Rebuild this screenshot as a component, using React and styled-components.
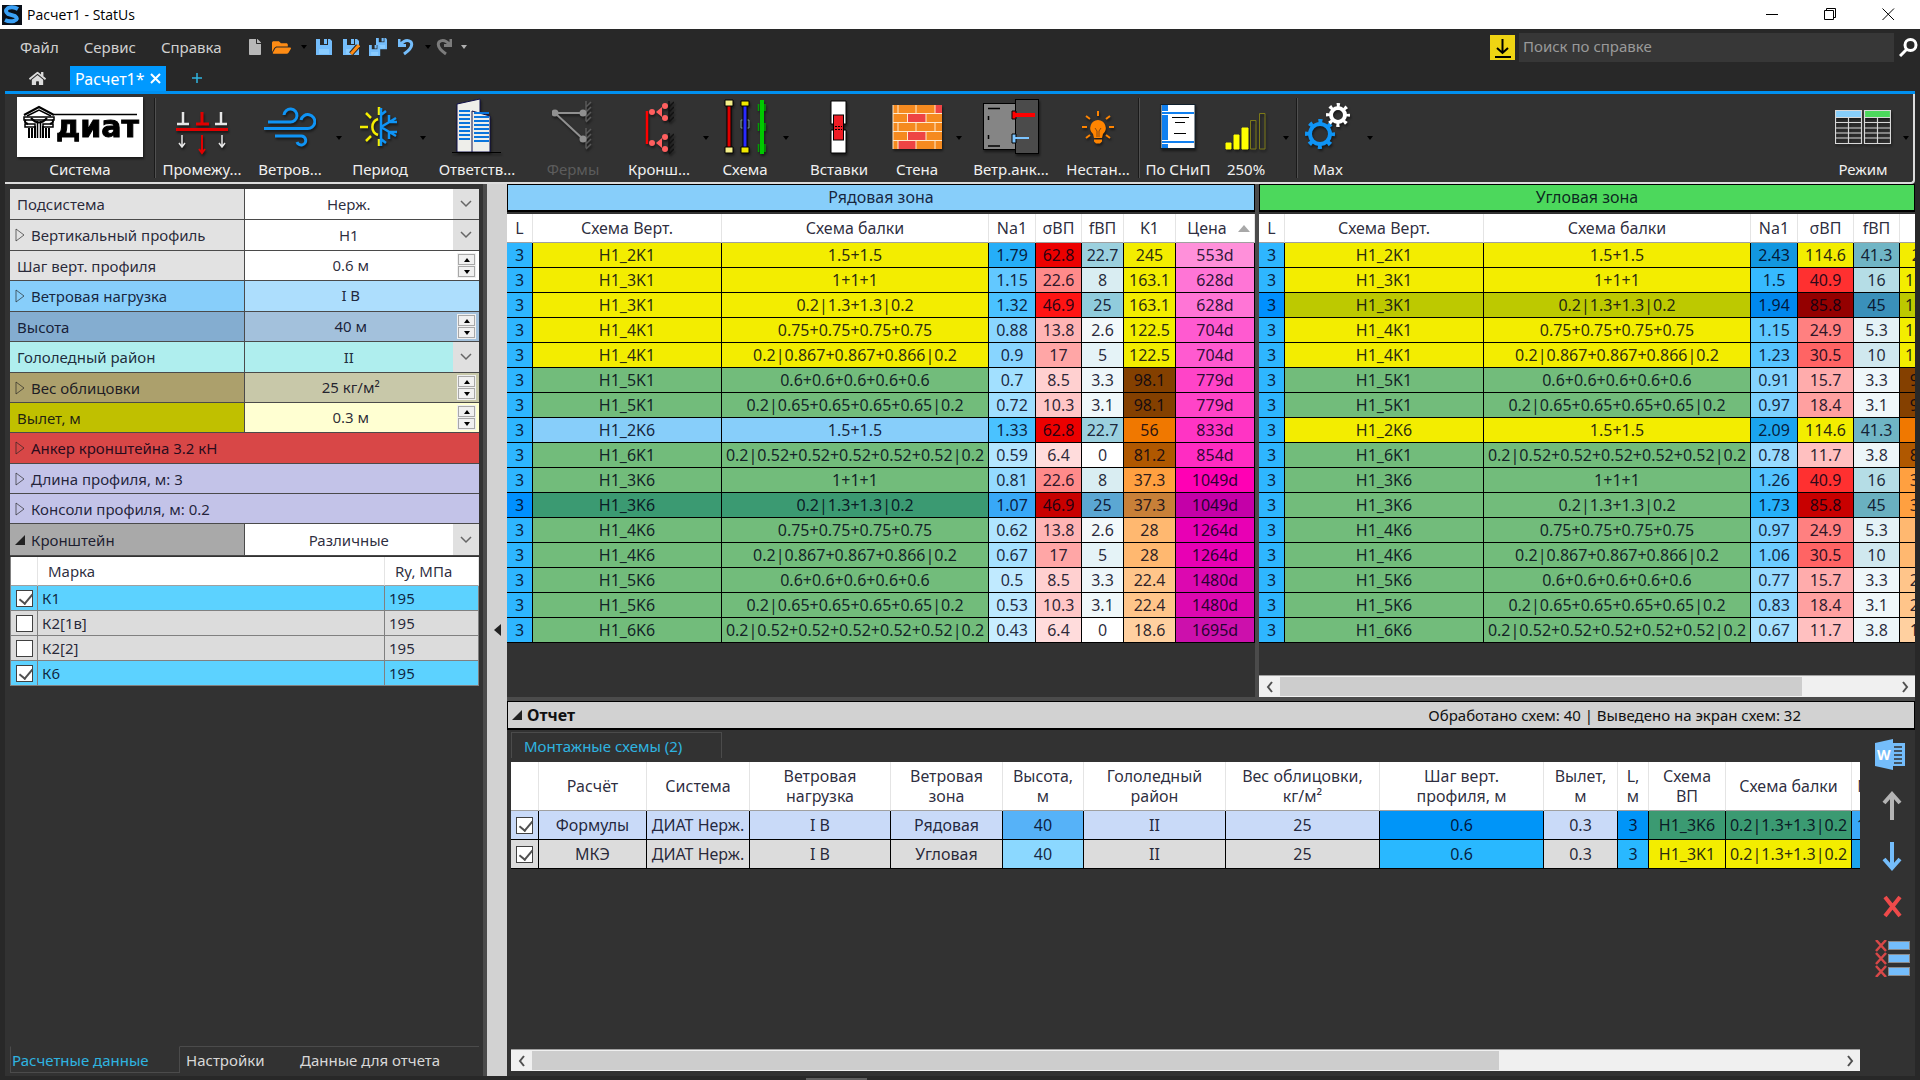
import React, { useState } from "react";
import styled, { createGlobalStyle, css } from "styled-components";
import { FaFile, FaFolderOpen, FaHome } from "react-icons/fa";

const GlobalStyle = createGlobalStyle`
  * {
    box-sizing: border-box;
  }
  body {
    margin: 0;
    background: #282828;
    font-family: "Noto Sans", "DejaVu Sans", sans-serif;
    font-size: 16px;
    line-height: 22px;
    color: #e4e4e4;
  }
  button, input, select {
    font: inherit;
    color: inherit;
    margin: 0;
    padding: 0;
    border: 0;
    border-radius: 0;
    background: none;
  }
  svg {
    display: block;
    flex: none;
  }
`;

const ink = "rgba(0, 0, 20, 0.84)";

const Page = styled.div`
  min-height: 100vh;
  display: flex;
  flex-direction: column;
`;

//------------------------------------------------ window frame
const TitleBar = styled.header`
  height: 29px;
  display: flex;
  align-items: center;
  background: white;
  color: black;
  padding: 0 3px 0 2px;
  h1 {
    flex: 1;
    margin: 0 0 0 5px;
    font: 14px/20px "Open Sans", "Noto Sans", sans-serif;
  }
`;

const WindowButton = styled.button`
  width: 58px;
  height: 29px;
  display: flex;
  align-items: center;
  justify-content: center;
`;

const MenuBar = styled.nav`
  height: 36px;
  display: flex;
  align-items: center;
  padding: 0 2px 0 20px;
  font-size: 15px;
`;

const MenuButton = styled.button`
  margin-right: 25px;
  color: #d0d0d0;
`;

const QuickButton = styled.button`
  width: ${p => p.$w}px;
  height: 22px;
  display: flex;
  align-items: center;
  color: ${p => p.$color};
`;

const Download = styled.button`
  width: 25px;
  height: 25px;
  margin: 0 4px 0 auto;
  background: #efd413;
`;

const SearchInput = styled.input`
  width: 375px;
  height: 29px;
  padding: 0 4px 2px;
  margin-right: 5px;
  background: #373737;
  &::placeholder {
    color: #9a9a9a;
    opacity: 1;
  }
`;

const TabRow = styled.div`
  height: 29px;
  margin: 0 5px;
  padding-left: 24px;
  display: flex;
  align-items: center;
  border-bottom: 3px solid #0090f0;
`;

const DocTab = styled.div`
  align-self: flex-end;
  height: 25px;
  margin: 0 26px 0 24px;
  padding: 0 5px;
  display: flex;
  align-items: center;
  gap: 5px;
  background: #0099ff;
  color: white;
`;

//------------------------------------------------ toolbar
const Toolbar = styled.div`
  height: 90px;
  margin: 0 5px 0 5px;
  padding: 3px 1px 0 2px;
  display: flex;
  align-items: flex-start;
  font-size: 15px;
  background: #323232;
  border-bottom: 2px solid #dcdcdc;
  border-right: 2px solid #dcdcdc;
  border-bottom-right-radius: 4px;
`;

const ToolButton = styled.button`
  width: ${p => p.$w}px;
  display: flex;
  flex-direction: column;
  align-items: center;
  gap: 1px;
  white-space: nowrap;
  color: ${p => (p.$off ? "#5c5c5c" : "#f0f0f0")};
  svg {
    filter: drop-shadow(1px 2px 1px rgba(0, 0, 0, 0.5));
  }
`;

const Caret = styled.button`
  width: ${p => p.$w}px;
  height: 82px;
  display: flex;
  align-items: center;
  justify-content: center;
  &::after {
    content: "";
    border: 3px solid transparent;
    border-top: 4px solid ${p => p.$color || "black"};
    border-bottom: 0;
  }
`;

const MenuCaret = styled(Caret)`
  height: 22px;
`;

const Separator = styled.div`
  width: 2px;
  height: 80px;
  margin: 1px 1px 0;
  background: #1a1a1a;
  border-right: 1px solid #505050;
`;

const Spring = styled.div`
  flex: 1;
`;

//------------------------------------------------ body
const Body = styled.div`
  flex: 1;
  margin: 0 5px;
  display: flex;
  min-height: 0;
  background: #323232;
`;

const SidePanel = styled.aside`
  width: 478px;
  padding: 5px 4px 0 5px;
  display: flex;
  flex-direction: column;
  font-size: 15px;
`;

const Splitter = styled.button`
  width: 24px;
  border-left: 4px solid #4b4b4b;
  background: #d2d2d2;
  display: flex;
  align-items: center;
  justify-content: center;
`;

const PropRow = styled.div`
  height: ${p => p.$h || 30}px;
  display: flex;
  color: ${ink};
  background: ${p => p.$bg};
  border-bottom: 1px solid #4a4a4a;
`;

const PropName = styled.div`
  flex: 0 0 50%;
  display: flex;
  align-items: center;
  padding-left: ${p => (p.$tree ? 5 : 7)}px;
  gap: 5px;
  border-right: 1px solid #4a4a4a;
`;

const PropValue = styled.div`
  flex: 1;
  position: relative;
  display: flex;
  align-items: center;
  justify-content: center;
  background: ${p => p.$bg};
  input {
    width: 100%;
    text-align: center;
    padding: 0 22px 2px 0;
  }
  select {
    width: 100%;
    height: 100%;
    appearance: none;
    text-align: center;
    text-align-last: center;
    padding-right: 26px;
  }
`;

const DropMark = styled.span`
  position: absolute;
  right: 0;
  top: 0;
  bottom: 0;
  width: 26px;
  display: flex;
  align-items: center;
  justify-content: center;
  background: #e0e0e0;
  pointer-events: none;
`;

const Spin = styled.span`
  position: absolute;
  right: 3px;
  top: 2px;
  bottom: 2px;
  width: 19px;
  padding: 1px;
  display: flex;
  flex-direction: column;
  gap: 1px;
  background: #f0f0f0;
  button {
    flex: 1;
    border: 1px solid #a8a8a8;
    display: flex;
    align-items: center;
    justify-content: center;
  }
`;

const ExpandRow = styled.button`
  height: ${p => p.$h || 30}px;
  display: flex;
  align-items: center;
  gap: 5px;
  padding-left: 5px;
  color: ${ink};
  background: ${p => p.$bg};
  border-bottom: 1px solid #4a4a4a;
`;

const Check = styled.input.attrs({ type: "checkbox" })`
  appearance: none;
  display: block;
  width: 17px;
  height: 17px;
  margin: 0 auto;
  background: white;
  border: 1px solid #404040;
  &:checked::after {
    content: "";
    display: block;
    width: 6px;
    height: 11px;
    margin: 0 0 0 5px;
    border: solid #505050;
    border-width: 0 2px 2px 0;
    transform: rotate(40deg);
  }
`;

const Grid = styled.table`
  width: ${p => (p.$w ? p.$w + "px" : "100%")};
  table-layout: fixed;
  border-collapse: separate;
  border-spacing: 0;
  color: ${ink};
  th {
    padding: 0;
    font-weight: normal;
    background: white;
    border-right: 1px solid #e4e4e4;
    border-bottom: 1px solid #a0a0a0;
  }
  td {
    padding: 0;
    text-align: center;
    white-space: nowrap;
    overflow: hidden;
  }
`;

const MarkGrid = styled(Grid)`
  margin-top: 1px;
  border-left: 1px solid #808080;
  th {
    height: 29px;
    text-align: left;
    padding-left: 10px;
  }
  td {
    height: 25px;
    text-align: left;
    border-right: 1px solid #808080;
    border-bottom: 1px solid #808080;
  }
  td + td {
    padding-left: 4px;
  }
`;

const MarkRow = styled.tr`
  background: ${p => (p.$on ? "#5cd2ff" : "#dcdcdc")};
`;

const SideTabs = styled.div`
  margin: auto 0 3px;
  height: 27px;
  display: flex;
`;

const SideTab = styled.button`
  width: ${p => p.$w}px;
  text-align: left;
  color: ${p => (p.$active ? "#2fb4e0" : "#d8d8d8")};
  padding-left: ${p => (p.$active ? 1 : 6)}px;
  border-top: 1px solid #4b4b4b;
  ${p =>
    p.$active &&
    css`
      border: 1px solid #4b4b4b;
      border-top-color: transparent;
    `}
`;

const Main = styled.main`
  flex: 1;
  min-width: 0;
  display: flex;
  flex-direction: column;
`;

const Zones = styled.div`
  display: flex;
  border-bottom: 4px solid #4b4b4b;
`;

const Zone = styled.section`
  flex: ${p => p.$grow} 1 0;
  min-width: 0;
  overflow: hidden;
  & + & {
    border-left: 4px solid #4b4b4b;
  }
  h2 {
    height: 28px;
    margin: 0 0 2px;
    font: inherit;
    line-height: 24px;
    text-align: center;
    color: ${ink};
    background: ${p => p.$bg};
    border: 1px solid black;
    border-bottom-width: 2px;
  }
`;

const ZoneGrid = styled(Grid)`
  th {
    height: 29px;
  }
  td {
    height: 25px;
    border-right: 1px solid black;
    border-bottom: 1px solid black;
  }
`;

const Cell = styled.td`
  background: ${p => p.$bg};
`;

const SortMark = styled.span`
  float: right;
  margin: 8px 4px 0 0;
  border: 6px solid transparent;
  border-bottom: 7px solid #a8a8a8;
  border-top: 0;
`;

const ScrollBar = styled.div`
  height: 22px;
  margin-top: ${p => p.$top};
  display: flex;
  background: #f0f0f0;
  border-top: 1px solid #a0a0a0;
  button {
    width: 21px;
    display: flex;
    align-items: center;
    justify-content: center;
  }
`;

const Track = styled.div`
  flex: 1;
  display: flex;
`;

const Thumb = styled.div`
  width: ${p => p.$size};
  margin: 1px 0;
  background: #cdcdcd;
`;

const ReportHead = styled.div`
  height: 29px;
  display: flex;
  align-items: center;
  gap: 4px;
  padding: 0 113px 0 4px;
  font-size: 15px;
  color: #101010;
  background: #d2d2d2;
  border: 1px solid black;
  border-bottom-width: 2px;
  h2 {
    flex: 1;
    margin: 0;
    font: bold 16px/22px "Noto Sans", sans-serif;
  }
`;

const Report = styled.section`
  flex: 1;
  display: flex;
  min-height: 0;
`;

const ReportMain = styled.div`
  flex: 1;
  min-width: 0;
  margin: 2px 0 5px 4px;
  overflow: hidden;
  display: flex;
  flex-direction: column;
`;

const ReportTab = styled.button`
  width: 211px;
  height: 26px;
  padding-left: 12px;
  margin-bottom: 4px;
  text-align: left;
  font-size: 15px;
  color: #2fb4e0;
  border: 1px solid #4b4b4b;
  border-bottom: 0;
`;

const ReportGrid = styled(Grid)`
  th {
    height: 49px;
    line-height: 20px;
    white-space: pre-line;
  }
  td {
    height: 29px;
    border-right: 1px solid black;
    border-bottom: 1px solid black;
  }
`;

const Actions = styled.div`
  width: 55px;
  padding: 9px 0 0 15px;
  display: flex;
  flex-direction: column;
  gap: 20px;
  button {
    width: 36px;
    height: 31px;
    display: flex;
    align-items: center;
  }
`;

const Footer = styled.footer`
  height: 4px;
  display: flex;
  align-items: flex-end;
  padding-left: 42%;
  div {
    width: 61px;
    height: 2px;
    background: #5f5f5f;
  }
`;

//------------------------------------------------ drawings
const Tri = ({ open }) => (
  <svg width="11" height="14" viewBox="0 0 11 14">
    {open ? (
      <path d="M10 2V12H0Z" fill="#222" />
    ) : (
      <path d="M1 1L9 7L1 13Z" fill="none" stroke="#222" strokeOpacity="0.65" />
    )}
  </svg>
);

const Chevron = () => (
  <svg width="12" height="8" viewBox="0 0 12 8">
    <path d="M1 1L6 6L11 1" fill="none" stroke="#666" strokeWidth="1.5" />
  </svg>
);

const ScrollArrow = ({ right }) => (
  <svg width="8" height="12" viewBox="0 0 8 12">
    <path d={right ? "M2 1L6 6L2 11" : "M6 1L2 6L6 11"} fill="none" stroke="#505050" strokeWidth="2" />
  </svg>
);

// every toolbar drawing is 60 high so the captions line up
const Art = ({ w, children }) => (
  <svg width={w} height="60" viewBox={`0 0 ${w} 60`} fill="none">
    {children}
  </svg>
);

const Logo = () => (
  <svg width="126" height="60" viewBox="0 0 126 60">
    <rect width="126" height="60" fill="white" />
    <g fill="none" stroke="black" strokeWidth="1.5">
      <path d="M7 18L22 10L37 18" strokeWidth="2" />
      <path d="M10 19L22 13L34 19M37 17.5H120" />
      <path d="M7 20H37V23H7Z" />
      <path d="M11 27Q6 25 9 23M33 27Q38 25 35 23" strokeWidth="2" />
      <path d="M8 27H18V30H8ZM26 27H36V30H26Z" />
      <path d="M12 31V41M15 31V41M18 29V41M26 29V41M29 31V41M32 31V41" strokeWidth="2" />
      <path d="M20.5 24V41M23.5 24V41" />
      <path d="M14 21Q22 30 30 21" strokeWidth="2" />
    </g>
    <text x="39" y="40" fontFamily="'DejaVu Sans', sans-serif" fontWeight="bold" fontSize="30" stroke="black">
      диат
    </text>
  </svg>
);

const Spacing = () => (
  <Art w={52}>
    <g stroke="#e6e6e6" strokeWidth="2.5">
      <path d="M7 15V26M1 27H13M45 15V26M39 27H51" />
      <path d="M6 38V50M3 46L6 50L9 46M46 38V50M43 46L46 50L49 46" strokeWidth="1.5" />
    </g>
    <g stroke="#e00000" strokeWidth="3">
      <path d="M26 15V26M20 27H33M0 32.5H52" />
      <path d="M26 38V56M23 52L26 56L29 52" strokeWidth="2" />
    </g>
  </Art>
);

const WindArt = () => (
  <Art w={52}>
    <g stroke="#0f94f5" strokeWidth="3">
      <path d="M4 25H26A6.5 6.5 0 1 0 20 18" />
      <path d="M0 31.5H43A7 7 0 1 0 37 23" />
      <path d="M11 39H37A4.5 4.5 0 1 1 33 45" />
    </g>
  </Art>
);

const Season = () => (
  <Art w={40}>
    <g stroke="#f5ee00" strokeWidth="2.5">
      <path d="M18 22A8.5 8.5 0 0 0 18 38M0 30H8M6 16L11 21M6 44L11 39M19 10V18M19 42V49" />
    </g>
    <g stroke="#0f94f5" strokeWidth="2.5">
      <path d="M21 11V49M21 30L36 21M21 30L36 39M21 18L26 14M21 42L26 46M29 18V25H37M29 42V35H37" />
    </g>
  </Art>
);

const Buildings = () => (
  <Art w={50}>
    <g fill="#eeeeea" stroke="#10104a">
      <path d="M5 7L28 2V55H5Z" />
      <path d="M20 14L38 19V55H20Z" />
    </g>
    <g stroke="#0a74dc" strokeWidth="2.2">
      {[14, 18, 22, 26, 30, 34, 38, 42].map(y => (
        <path key={y} d={`M7 ${y}H18M22 ${y + 2}H37`} />
      ))}
    </g>
    <path d="M0 55.5H49" stroke="black" />
  </Art>
);

const hatch = (x, y) => `M${x} ${y}V${y + 20}M${x} ${y + 6}l5 -5M${x} ${y + 11}l5 -5M${x} ${y + 16}l5 -5M${x} ${y + 21}l5 -5`;

const Truss = () => (
  <Art w={42}>
    <path d={hatch(34, 4) + hatch(34, 31)} stroke="#5a5a5a" strokeWidth="1.5" />
    <path d="M3 16H31M3 16L31 42" stroke="#909090" strokeWidth="2" />
    <g fill="#909090">
      <circle cx="3" cy="16" r="3.5" />
      <circle cx="31" cy="16" r="3.5" />
      <circle cx="31" cy="42" r="3.5" />
    </g>
  </Art>
);

const Bracket = () => (
  <Art w={30}>
    <path d={hatch(25, 4) + hatch(25, 36)} stroke="#111" strokeWidth="1.5" />
    <path d="M3 14V47" stroke="red" strokeWidth="2.5" />
    {[0, 31].map(dy => (
      <g key={dy} fill="#ff5f5f">
        <circle cx="8" cy={15 + dy} r="3" />
        <path d={`M12 ${15 + dy}l6 -5v10Z`} />
        <circle cx="21" cy={9 + dy} r="3" />
        <circle cx="21" cy={21 + dy} r="3" />
      </g>
    ))}
  </Art>
);

const Beams = () => (
  <Art w={42}>
    <g stroke="black">
      <path d="M3 6H7V53H3Z" fill="#e00000" />
      <path d="M1 3H9V9H1ZM1 50H9V56H1Z" fill="#f5f08a" />
      <path d="M17 23H25V31H17Z" stroke="#7a9a9a" />
      <path d="M19 6H23V53H19Z" fill="#2a2aff" />
      <path d="M17 4H25V9H17ZM17 50H25V56H17Z" fill="#f0e800" />
    </g>
    <path d="M38 3V57" stroke="#00c800" strokeWidth="4" />
    <path d="M34.5 7V14M41 7V14M34.5 26V34M41 26V34M34.5 47V55M41 47V55" stroke="#00a000" strokeWidth="1.5" />
  </Art>
);

const Inserts = () => (
  <Art w={18}>
    <path d="M1 4H16V27H1ZM1 33H16V56H1Z" fill="white" stroke="black" />
    <rect x="3.5" y="18" width="10" height="25" fill="#ee1c24" stroke="black" />
    <path d="M5 29.5H12M5 32.5H12" stroke="black" strokeDasharray="2 1" />
  </Art>
);

const Bricks = () => (
  <Art w={50}>
    <rect x="1" y="8" width="49" height="44" fill="#f58a1f" />
    <g fill="#ee4444">
      <rect x="43" y="8" width="7" height="8" />
      <rect x="16" y="17" width="18" height="8" />
      <rect x="16" y="35" width="18" height="8" />
      <rect x="6" y="44" width="18" height="8" />
    </g>
    <path
      d="M1 8V52M1 16.5H50M1 25.5H50M1 34.5H50M1 43.5H50M6 8V16M24 8V16M43 8V16M15.5 17V25M34 17V25M6 26V34M24 26V34M43 26V34M15.5 35V43M34 35V43M6 44V52M24 44V52M43 44V52"
      stroke="#ffe9cc"
    />
  </Art>
);

const Anchor = () => (
  <Art w={58}>
    <rect x="1.5" y="6.5" width="33" height="46" fill="#858585" stroke="black" />
    <rect x="33.5" y="2.5" width="23" height="54" fill="#4b4b4b" stroke="black" />
    <path d="M6 11.5H18M6 49H18M6.5 19V23M6.5 38V42" stroke="black" strokeWidth="1.5" />
    <path d="M30 14V22H34V14Z" fill="red" stroke="black" />
    <path d="M32 18H53" stroke="red" strokeWidth="4" />
    <path d="M30 37V46H34V37Z" fill="#7cc4ff" stroke="black" />
    <path d="M32 41H47" stroke="#7cc4ff" strokeWidth="2" />
  </Art>
);

const Bulb = () => (
  <Art w={34}>
    <path d="M17 23a8 8 0 0 0 -5 14l1 4h8l1 -4a8 8 0 0 0 -5 -14ZM13 42.5h8v2l-2 2h-4l-2 -2Z" fill="#ff8400" />
    <path d="M14 31L16 34V40M20 31L18 34V40" stroke="#8a4a10" />
    <path
      d="M17 14V19M1 30H6M28 30H33M5 19L9 22M29 19L25 22M5 41L9 38M29 41L25 38"
      stroke="#ff8400"
      strokeWidth="2"
    />
  </Art>
);

const Book = () => (
  <Art w={36}>
    <rect x="1" y="7.5" width="34" height="44" fill="white" stroke="#10202c" />
    <path d="M5 8V51" stroke="#1080f0" strokeWidth="6" />
    <path d="M2 16H34M2 45H34" stroke="white" strokeWidth="4" />
    <path d="M2 16H34M2 45H34" stroke="#1080f0" strokeWidth="2" />
    <path d="M12 20.5H29M15 25.5H25M14 36.5H26" stroke="black" />
  </Art>
);

const Levels = () => (
  <Art w={42}>
    <path d="M1 46H6V52H1ZM9 38H14V52H9ZM17 31H23V52H17Z" fill="yellow" stroke="yellow" />
    <path d="M25.5 23.5H31V52H25.5ZM34.5 16.5H40V52H34.5Z" stroke="#7d7a18" />
  </Art>
);

// the teeth are a dashed ring round the wheel
const Gear = ({ x, y, r, color }) => (
  <g stroke={color}>
    <circle cx={x} cy={y} r={r - 5} strokeWidth="4" />
    <circle
      cx={x}
      cy={y}
      r={r - 2}
      strokeWidth="4"
      strokeDasharray={`${((r - 2) * Math.PI) / 10} ${((r - 2) * Math.PI * 3) / 20}`}
      strokeDashoffset={((r - 2) * Math.PI) / 20}
    />
  </g>
);

const Gears = () => (
  <Art w={48}>
    <Gear x={16} y={37} r={15} color="#0f94f5" />
    <Gear x={34} y={18} r={12} color="white" />
  </Art>
);

const Mode = () => (
  <Art w={56}>
    <rect x="1" y="14" width="26" height="7" fill="#87cefa" />
    <rect x="30" y="14" width="25" height="7" fill="#4cd85c" />
    {[0, 29].map(dx => (
      <path
        key={dx}
        d={`M${dx + 0.5} 13.5h26v33h-26ZM${dx + 0.5} 20.5h26m-26 5h26m-26 5.5h26m-26 5h26m-26 5h26m-13 -20v26`}
        stroke="#d8d8d8"
        strokeWidth="1.2"
      />
    ))}
  </Art>
);

const Floppy = ({ x, y, s }) => (
  <g transform={`translate(${x} ${y}) scale(${s})`}>
    <path d="M0 0H14L16 2V16H0Z" fill="#74bdfb" />
    <path d="M4 0H12V6H4Z" fill="#282828" />
    <path d="M8 0H11V5H8Z" fill="#74bdfb" />
    <path d="M3 10H13V15H3Z" fill="#8accff" />
  </g>
);

//------------------------------------------------ data
const Y = "#f3ed00";
const G = "#72bc7b";

const schemes = [
  ["H1_2K1", "1.5+1.5"],
  ["H1_3K1", "1+1+1"],
  ["H1_3K1", "0.2|1.3+1.3|0.2"],
  ["H1_4K1", "0.75+0.75+0.75+0.75"],
  ["H1_4K1", "0.2|0.867+0.867+0.866|0.2"],
  ["H1_5K1", "0.6+0.6+0.6+0.6+0.6"],
  ["H1_5K1", "0.2|0.65+0.65+0.65+0.65|0.2"],
  ["H1_2K6", "1.5+1.5"],
  ["H1_6K1", "0.2|0.52+0.52+0.52+0.52+0.52|0.2"],
  ["H1_3K6", "1+1+1"],
  ["H1_3K6", "0.2|1.3+1.3|0.2"],
  ["H1_4K6", "0.75+0.75+0.75+0.75"],
  ["H1_4K6", "0.2|0.867+0.867+0.866|0.2"],
  ["H1_5K6", "0.6+0.6+0.6+0.6+0.6"],
  ["H1_5K6", "0.2|0.65+0.65+0.65+0.65|0.2"],
  ["H1_6K6", "0.2|0.52+0.52+0.52+0.52+0.52|0.2"]
];

// "value colour" pairs, one line for each scheme: Na1, σВП, fВП
const rowLoads = `
1.79 #25aef8 62.8 #ec0000 22.7 #9bd0de
1.15 #62c8ff 22.6 #ff8a8a 8 #d9edf2
1.32 #4ac2ff 46.9 #ff1414 25 #90ccdc
0.88 #8ad6ff 13.8 #ffb4b4 2.6 #f3f9fb
0.9 #88d5ff 17 #ffa6a6 5 #e5f3f7
0.7 #a2e0ff 8.5 #ffd0d0 3.3 #eff7fa
0.72 #a0dfff 10.3 #ffc6c6 3.1 #f0f8fa
1.33 #4ac2ff 62.8 #ec0000 22.7 #9bd0de
0.59 #b4e6ff 6.4 #ffdcdc 0 #ffffff
0.81 #94daff 22.6 #ff8a8a 8 #d9edf2
1.07 #38a8f7 46.9 #c80000 25 #5ba7d3
0.62 #b0e5ff 13.8 #ffb4b4 2.6 #f3f9fb
0.67 #a6e1ff 17 #ffa6a6 5 #e5f3f7
0.5 #c0eaff 8.5 #ffd0d0 3.3 #eff7fa
0.53 #bce9ff 10.3 #ffc6c6 3.1 #f0f8fa
0.43 #c8edff 6.4 #ffdcdc 0 #ffffff`;

const cornerLoads = `
2.43 #1297e0 114.6 #f3ed00 41.3 #70b5c5
1.5 #36b9ff 40.9 #ff3030 16 #b5dde6
1.94 #0088ee 85.8 #940000 45 #3a90ba
1.15 #5ec8ff 24.9 #ff8080 5.3 #e4f2f6
1.23 #56c4ff 30.5 #ff6464 10 #d0e8ef
0.91 #84d4ff 15.7 #ffacac 3.3 #eff7fa
0.97 #7cd1ff 18.4 #ffa0a0 3.1 #f0f8fa
2.09 #1ba4ee 114.6 #f3ed00 41.3 #70b5c5
0.78 #98dbff 11.7 #ffc0c0 3.8 #edf6f9
1.26 #54c4ff 40.9 #ff3030 16 #b5dde6
1.73 #25b0fa 85.8 #c80000 45 #6ab0c0
0.97 #7cd1ff 24.9 #ff8080 5.3 #e4f2f6
1.06 #6cccff 30.5 #ff6464 10 #d0e8ef
0.77 #98dbff 15.7 #ffacac 3.3 #eff7fa
0.83 #90d8ff 18.4 #ffa0a0 3.1 #f0f8fa
0.67 #a8e2ff 11.7 #ffc0c0 3.8 #edf6f9`;

// K1 and price are the same in both zones
const costs = `
245 #f3ed00 553d #ff90da
163.1 #f3ed00 628d #ff75d6
163.1 #f3ed00 628d #ff75d6
122.5 #f3ed00 704d #ff5ad0
122.5 #f3ed00 704d #ff5ad0
98.1 #844000 779d #ff44c8
98.1 #844000 779d #ff44c8
56 #f07800 833d #ff34c4
81.2 #b05800 854d #ff2cc2
37.3 #ffa040 1049d #ff00b4
37.3 #ffa040 1049d #ff00b4
28 #ffb870 1264d #e800b4
28 #ffb870 1264d #e800b4
22.4 #ffc58a 1480d #dc08b0
22.4 #ffc58a 1480d #dc08b0
18.6 #ffd0a0 1695d #cc10ac`;

const parse = text =>
  text
    .trim()
    .split("\n")
    .map(line => line.split(" "));

const zones = [
  {
    name: "Рядовая зона",
    bg: "#87cefa",
    grow: 748,
    cols: [26, 189, 267, 47, 46, 42, 52, 79],
    loads: parse(rowLoads),
    fill: [Y, Y, Y, Y, Y, G, G, "#87cefa", G, G, "#3b9a72", G, G, G, G, G],
    selected: 10,
    selectedCost: ["#c88038", "#c400a8"]
  },
  {
    name: "Угловая зона",
    bg: "#4cd85c",
    grow: 656,
    scroll: true,
    cols: [26, 199, 267, 47, 56, 46, 52, 79],
    loads: parse(cornerLoads),
    fill: [Y, Y, "#bdc900", Y, Y, G, G, Y, G, G, G, G, G, G, G, G],
    selected: 2,
    selectedCost: ["#bdc900", "#d060c0"]
  }
];

const zoneHeads = ["L", "Схема Верт.", "Схема балки", "Na1", "σВП", "fВП", "K1", "Цена"];

const tools = [
  { label: "Промежу...", w: 90, Icon: Spacing },
  { label: "Ветров...", w: 86, Icon: WindArt, caret: 12 },
  { label: "Период", w: 70, Icon: Season, caret: 16 },
  { label: "Ответств...", w: 92, Icon: Buildings },
  { label: "Фермы", w: 100, Icon: Truss, off: true },
  { label: "Кронш...", w: 72, Icon: Bracket, caret: 22 },
  { label: "Схема", w: 56, Icon: Beams, caret: 26 },
  { label: "Вставки", w: 80, Icon: Inserts },
  { label: "Стена", w: 76, Icon: Bricks, caret: 8 },
  { label: "Ветр.анк...", w: 96, Icon: Anchor },
  { label: "Нестан...", w: 78, Icon: Bulb },
  { sep: true },
  { label: "По СНиП", w: 74, Icon: Book },
  { label: "250%", w: 62, Icon: Levels, caret: 18 },
  { sep: true },
  { label: "Max", w: 58, Icon: Gears, caret: 26 },
  { spring: true },
  { label: "Режим", w: 74, Icon: Mode, caret: 12 }
];

const props = [
  { id: "sub", name: "Подсистема", value: "Нерж.", kind: "select", h: 31, bg: "#e2e2e2", vbg: "white" },
  { id: "vert", name: "Вертикальный профиль", value: "H1", kind: "select", tree: true, h: 31, bg: "#e2e2e2", vbg: "white" },
  { id: "step", name: "Шаг верт. профиля", value: "0.6 м", kind: "spin", bg: "#e2e2e2", vbg: "white" },
  { id: "wind", name: "Ветровая нагрузка", value: "I B", kind: "text", tree: true, h: 31, bg: "#87cefa", vbg: "#addefd" },
  { id: "height", name: "Высота", value: "40 м", kind: "spin", bg: "#84add0", vbg: "#a3c1dc" },
  { id: "ice", name: "Гололедный район", value: "II", kind: "select", h: 31, bg: "#afeeee", vbg: "#afeeee" },
  { id: "weight", name: "Вес облицовки", value: "25 кг/м²", kind: "spin", tree: true, bg: "#aca06c", vbg: "#c8c8a9" },
  { id: "offset", name: "Вылет, м", value: "0.3 м", kind: "spin", bg: "#c0c000", vbg: "#ffffd2" }
];

const bracketProp = {
  id: "bracket",
  name: "Кронштейн",
  value: "Различные",
  kind: "select",
  tree: true,
  open: true,
  h: 32,
  bg: "#a9a9a9",
  vbg: "white"
};

const reportCols = [28, 108, 103, 141, 112, 81, 142, 154, 164, 74, 31, 77, 126, 42];
const reportHeads = [
  "",
  "Расчёт",
  "Система",
  "Ветровая\nнагрузка",
  "Ветровая\nзона",
  "Высота,\nм",
  "Гололедный\nрайон",
  "Вес облицовки,\nкг/м²",
  "Шаг верт.\nпрофиля, м",
  "Вылет,\nм",
  "L,\nм",
  "Схема\nВП",
  "Схема балки",
  "Na1"
];

const reportRows = [
  {
    bg: "#c9daf8",
    cells: ["Формулы", "ДИАТ Нерж.", "I B", "Рядовая", "40", "II", "25", "0.6", "0.3", "3", "H1_3K6", "0.2|1.3+1.3|0.2", "1.07"],
    fills: { 4: "#56b2f8", 7: "#0095f8", 9: "#0095f8", 10: "#3b9a72", 11: "#3b9a72", 12: "#38a8f7" }
  },
  {
    bg: "#dcdcdc",
    cells: ["МКЭ", "ДИАТ Нерж.", "I B", "Угловая", "40", "II", "25", "0.6", "0.3", "3", "H1_3K1", "0.2|1.3+1.3|0.2", "1.9"],
    fills: { 4: "#8bd8ff", 7: "#29b8ff", 9: "#29b8ff", 10: Y, 11: Y, 12: "#1ba4ee" }
  }
];

//------------------------------------------------ parts
const Property = ({ id, name, value, kind, tree, open, h, bg, vbg }) => (
  <PropRow $h={h} $bg={bg}>
    <PropName $tree={tree}>
      {tree && (
        <button aria-label={`Раскрыть: ${name}`}>
          <Tri open={open} />
        </button>
      )}
      <label htmlFor={id}>{name}</label>
    </PropName>
    <PropValue $bg={vbg}>
      {kind === "select" ? (
        <>
          <select id={id} defaultValue={value}>
            <option>{value}</option>
          </select>
          <DropMark>
            <Chevron />
          </DropMark>
        </>
      ) : (
        <input id={id} defaultValue={value} />
      )}
      {kind === "spin" && (
        <Spin>
          <button aria-label="Больше">
            <svg width="6" height="4" viewBox="0 0 6 4"><path d="M3 0L6 4H0Z" /></svg>
          </button>
          <button aria-label="Меньше">
            <svg width="6" height="4" viewBox="0 0 6 4"><path d="M0 0H6L3 4Z" /></svg>
          </button>
        </Spin>
      )}
    </PropValue>
  </PropRow>
);

const Marks = () => {
  const [marks, setMarks] = useState([
    { name: "К1", on: true },
    { name: "К2[1в]", on: false },
    { name: "К2[2]", on: false },
    { name: "К6", on: true }
  ]);
  const toggle = i => setMarks(marks.map((m, n) => (n === i ? { ...m, on: !m.on } : m)));

  return (
    <MarkGrid>
      <colgroup>
        <col width="27" />
        <col />
        <col width="94" />
      </colgroup>
      <thead>
        <tr>
          <th />
          <th>Марка</th>
          <th>Ry, МПа</th>
        </tr>
      </thead>
      <tbody>
        {marks.map((m, i) => (
          <MarkRow key={m.name} $on={m.on}>
            <td>
              <Check aria-label={m.name} checked={m.on} onChange={() => toggle(i)} />
            </td>
            <td>{m.name}</td>
            <td>195</td>
          </MarkRow>
        ))}
      </tbody>
    </MarkGrid>
  );
};

const HScroll = ({ size, top }) => (
  <ScrollBar $top={top}>
    <button aria-label="Влево">
      <ScrollArrow />
    </button>
    <Track>
      <Thumb $size={size} />
    </Track>
    <button aria-label="Вправо">
      <ScrollArrow right />
    </button>
  </ScrollBar>
);

const costRows = parse(costs);

const ZoneTable = ({ zone }) => (
  <Zone $grow={zone.grow} $bg={zone.bg}>
    <h2>{zone.name}</h2>
    <ZoneGrid $w={zone.scroll && zone.cols.reduce((a, b) => a + b)}>
      <colgroup>
        {zone.cols.map((w, i) => (
          <col key={i} width={w} />
        ))}
      </colgroup>
      <thead>
        <tr>
          {zoneHeads.map(h => (
            <th key={h}>
              {h === "Цена" && <SortMark />}
              {h}
            </th>
          ))}
        </tr>
      </thead>
      <tbody>
        {schemes.map(([vert, beam], i) => {
          const [na, naBg, s, sBg, f, fBg] = zone.loads[i];
          const [k, kBg, price, priceBg] = costRows[i];
          const sel = i === zone.selected;
          return (
            <tr key={i}>
              <Cell $bg={sel ? "#0090ff" : "#2eb6ff"}>3</Cell>
              <Cell $bg={zone.fill[i]}>{vert}</Cell>
              <Cell $bg={zone.fill[i]}>{beam}</Cell>
              <Cell $bg={naBg}>{na}</Cell>
              <Cell $bg={sBg}>{s}</Cell>
              <Cell $bg={fBg}>{f}</Cell>
              <Cell $bg={sel ? zone.selectedCost[0] : kBg}>{k}</Cell>
              <Cell $bg={sel ? zone.selectedCost[1] : priceBg}>{price}</Cell>
            </tr>
          );
        })}
      </tbody>
    </ZoneGrid>
    {zone.scroll && <HScroll size="85%" top="32px" />}
  </Zone>
);

const ReportTable = () => (
  <ReportGrid $w={reportCols.reduce((a, b) => a + b)}>
    <colgroup>
      {reportCols.map((w, i) => (
        <col key={i} width={w} />
      ))}
    </colgroup>
    <thead>
      <tr>
        {reportHeads.map(h => (
          <th key={h}>{h}</th>
        ))}
      </tr>
    </thead>
    <tbody>
      {reportRows.map(row => (
        <tr key={row.bg}>
          <Cell $bg={row.bg}>
            <Check aria-label={row.cells[0]} defaultChecked />
          </Cell>
          {row.cells.map((c, i) => (
            <Cell key={i} $bg={row.fills[i] || row.bg}>
              {c}
            </Cell>
          ))}
        </tr>
      ))}
    </tbody>
  </ReportGrid>
);

const ReportActions = () => (
  <Actions>
    <button aria-label="Word">
      <svg width="31" height="31" viewBox="0 0 31 31">
        <path d="M17 4H30V27H17Z" fill="#74bdfb" />
        <path d="M19 8H27M19 12H27M19 16H27M19 20H27M19 24H27" stroke="#323232" strokeWidth="1.5" />
        <path d="M0 4L18 0V31L0 27Z" fill="#74bdfb" />
        <text x="2" y="21" fontSize="14" fontWeight="bold" fill="white">W</text>
      </svg>
    </button>
    <button aria-label="Вверх">
      <svg width="34" height="31" viewBox="0 0 34 31">
        <path d="M17 30V4M9 13L17 4L25 13" fill="none" stroke="#b4b4b4" strokeWidth="4" />
      </svg>
    </button>
    <button aria-label="Вниз">
      <svg width="34" height="31" viewBox="0 0 34 31">
        <path d="M17 1V27M9 18L17 27L25 18" fill="none" stroke="#74bdfb" strokeWidth="4" />
      </svg>
    </button>
    <button aria-label="Удалить">
      <svg width="34" height="31" viewBox="0 0 34 31">
        <path d="M10 5L25 24M25 5L10 24" fill="none" stroke="#ee4a4a" strokeWidth="4" />
      </svg>
    </button>
    <button aria-label="Удалить все">
      <svg width="36" height="37" viewBox="0 0 36 37">
        {[0, 13, 26].map(y => (
          <g key={y}>
            <path d={`M1 ${y}l10 11m0 -11l-10 11`} stroke="#d84848" strokeWidth="2.5" />
            <rect x="13.5" y={y + 1.5} width="21" height="8" fill="#74bdfb" stroke="#8a8a8a" />
          </g>
        ))}
      </svg>
    </button>
  </Actions>
);

export default function App() {
  return (
    <Page>
      <GlobalStyle />
      <TitleBar>
        <svg width="20" height="20" viewBox="0 0 20 20">
          <rect width="20" height="20" fill="#0a0f18" />
          <path d="M16 4Q11 1 6 3Q2 6 6 9L13 11Q17 14 12 16Q7 17 3 15" fill="none" stroke="#3aa0f5" strokeWidth="4" />
        </svg>
        <h1>Расчет1 - StatUs</h1>
        <WindowButton aria-label="Свернуть">
          <svg width="13" height="13"><path d="M0 6.5H12" stroke="black" /></svg>
        </WindowButton>
        <WindowButton aria-label="Восстановить">
          <svg width="13" height="13">
            <path d="M0.5 2.5H9.5V11.5H0.5ZM2.5 2.5V0.5H11.5V9.5H9.5" fill="none" stroke="black" />
          </svg>
        </WindowButton>
        <WindowButton aria-label="Закрыть">
          <svg width="13" height="13"><path d="M0.5 0.5L12 12M12 0.5L0.5 12" stroke="black" /></svg>
        </WindowButton>
      </TitleBar>

      <MenuBar>
        <MenuButton>Файл</MenuButton>
        <MenuButton>Сервис</MenuButton>
        <MenuButton>Справка</MenuButton>
        <QuickButton $w={25} $color="#b8b8b8" aria-label="Новый">
          <FaFile size={16} />
        </QuickButton>
        <QuickButton $w={20} $color="#ff8c14" aria-label="Открыть">
          <FaFolderOpen size={19} />
        </QuickButton>
        <MenuCaret $w={24} aria-label="Недавние" />
        <QuickButton $w={27} aria-label="Сохранить">
          <svg width="16" height="16"><Floppy x={0} y={0} s={1} /></svg>
        </QuickButton>
        <QuickButton $w={26} aria-label="Сохранить как">
          <svg width="17" height="16">
            <Floppy x={0} y={0} s={1} />
            <path d="M8 15L15 7" stroke="#282828" strokeWidth="5" />
            <path d="M8 15L16 6" stroke="#ff8c14" strokeWidth="3" />
          </svg>
        </QuickButton>
        <QuickButton $w={29} aria-label="Сохранить все">
          <svg width="18" height="18">
            <Floppy x={7} y={0} s={0.7} />
            <Floppy x={0} y={7} s={0.7} />
          </svg>
        </QuickButton>
        <QuickButton $w={22} aria-label="Отменить">
          <svg width="16" height="18" fill="none" stroke="#74bdfb" strokeWidth="3">
            <path d="M1 1V7.5H8M2 7Q8 0 13 4Q16 9 6 16" />
          </svg>
        </QuickButton>
        <MenuCaret $w={16} aria-label="История отмены" />
        <QuickButton $w={20} aria-label="Вернуть">
          <svg width="16" height="18" fill="none" stroke="#7c7c7c" strokeWidth="3">
            <path d="M15 1V7.5H8M14 7Q8 0 3 4Q0 9 10 16" />
          </svg>
        </QuickButton>
        <MenuCaret $w={16} $color="#b0b0b0" aria-label="История возврата" />
        <Download aria-label="Загрузить обновление">
          <svg width="25" height="25" viewBox="0 0 25 25">
            <path d="M12.5 4V18M7 13L12.5 18L18 13M5 22H21" fill="none" stroke="black" strokeWidth="2" />
          </svg>
        </Download>
        <SearchInput aria-label="Поиск по справке" placeholder="Поиск по справке" />
        <button aria-label="Найти">
          <svg width="19" height="19" viewBox="0 0 19 19" fill="none" stroke="white" strokeWidth="3">
            <circle cx="11.5" cy="7" r="5.5" />
            <path d="M8 11L1 18" />
          </svg>
        </button>
      </MenuBar>

      <TabRow>
        <button aria-label="Главная">
          <FaHome size={17} color="#dcdcdc" />
        </button>
        <DocTab>
          Расчет1*
          <button aria-label="Закрыть вкладку">
            <svg width="11" height="11"><path d="M1 1L10 10M10 1L1 10" stroke="white" strokeWidth="2" /></svg>
          </button>
        </DocTab>
        <button aria-label="Новая вкладка">
          <svg width="10" height="10"><path d="M5 0V10M0 5H10" stroke="#2fb4e0" strokeWidth="1.5" /></svg>
        </button>
      </TabRow>

      <Toolbar>
        <ToolButton $w={146}>
          <Logo />
          Система
        </ToolButton>
        <Separator />
        {tools.map(({ label, w, Icon, caret, off, sep, spring }, i) => {
          if (sep) return <Separator key={i} />;
          if (spring) return <Spring key={i} />;
          return (
            <React.Fragment key={i}>
              <ToolButton $w={w} $off={off} disabled={off}>
                <Icon />
                {label}
              </ToolButton>
              {caret && <Caret $w={caret} aria-label={`${label} меню`} />}
            </React.Fragment>
          );
        })}
      </Toolbar>

      <Body>
        <SidePanel>
          {props.map(p => (
            <Property key={p.id} {...p} />
          ))}
          <ExpandRow $h={31} $bg="#d84747">
            <Tri />
            Анкер кронштейна 3.2 кН
          </ExpandRow>
          <ExpandRow $bg="#c3c3e8">
            <Tri />
            Длина профиля, м: 3
          </ExpandRow>
          <ExpandRow $bg="#c3c3e8">
            <Tri />
            Консоли профиля, м: 0.2
          </ExpandRow>
          <Property {...bracketProp} />
          <Marks />
          <SideTabs>
            <SideTab $w={170} $active>Расчетные данные</SideTab>
            <SideTab $w={114}>Настройки</SideTab>
            <SideTab $w={185}>Данные для отчета</SideTab>
          </SideTabs>
        </SidePanel>
        <Splitter aria-label="Свернуть панель">
          <svg width="7" height="12"><path d="M7 0V12L0 6Z" fill="#222" /></svg>
        </Splitter>
        <Main>
          <Zones>
            {zones.map(z => (
              <ZoneTable key={z.name} zone={z} />
            ))}
          </Zones>
          <ReportHead>
            <Tri open />
            <h2>Отчет</h2>
            <span>Обработано схем: 40 | Выведено на экран схем: 32</span>
          </ReportHead>
          <Report>
            <ReportMain>
              <ReportTab>Монтажные схемы (2)</ReportTab>
              <ReportTable />
              <HScroll size="74%" top="auto" />
            </ReportMain>
            <ReportActions />
          </Report>
        </Main>
      </Body>
      <Footer>
        <div />
      </Footer>
    </Page>
  );
}
